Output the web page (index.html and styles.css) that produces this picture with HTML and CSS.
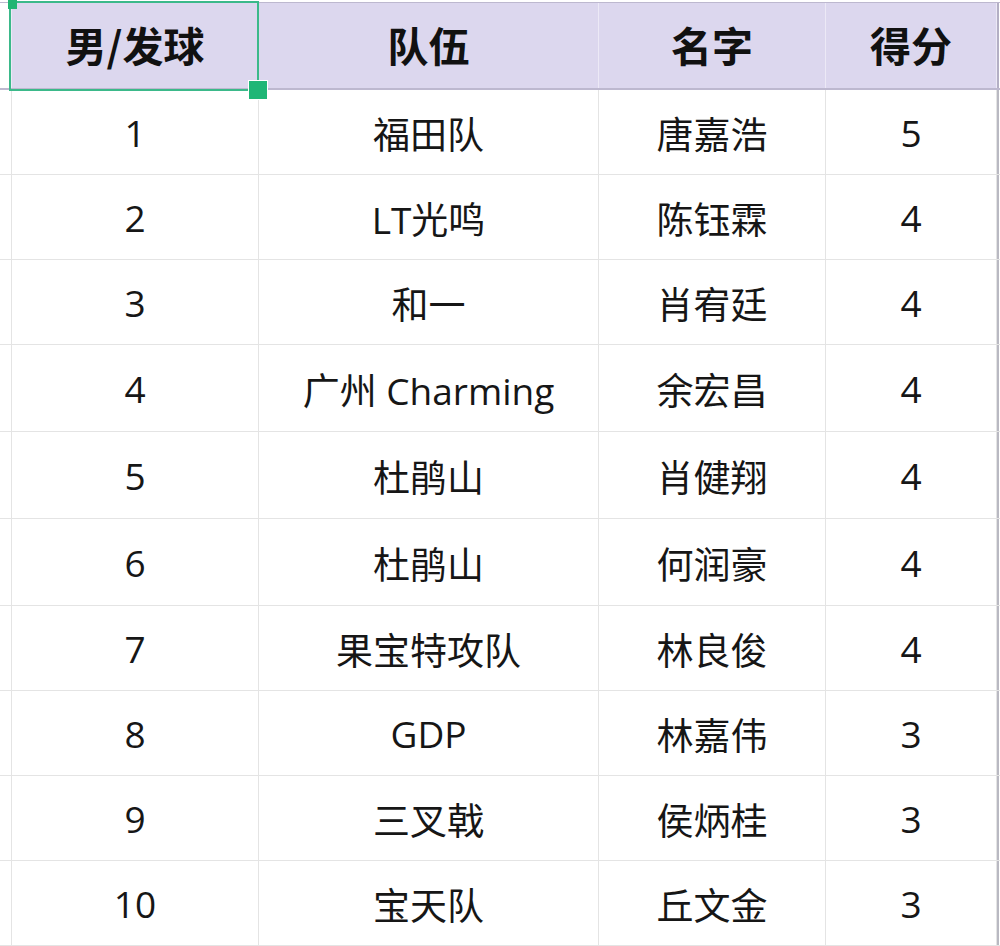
FILE: index.html
```html
<!DOCTYPE html>
<html lang="zh">
<head>
<meta charset="utf-8">
<link rel="stylesheet" href="styles.css">
</head>
<body>
<div class="sheet">
  <div class="row head">
    <div class="c gut"></div>
    <div class="c sel">男/发球<span class="corner"></span><span class="handle"></span></div>
    <div class="c">队伍</div>
    <div class="c">名字</div>
    <div class="c">得分</div>
    <div class="c edge"></div>
  </div>
  <div class="row"><div class="c gut"></div><div class="c">1</div><div class="c">福田队</div><div class="c">唐嘉浩</div><div class="c">5</div><div class="c edge"></div></div>
  <div class="row"><div class="c gut"></div><div class="c">2</div><div class="c">LT光鸣</div><div class="c">陈钰霖</div><div class="c">4</div><div class="c edge"></div></div>
  <div class="row"><div class="c gut"></div><div class="c">3</div><div class="c">和一</div><div class="c">肖宥廷</div><div class="c">4</div><div class="c edge"></div></div>
  <div class="row tall"><div class="c gut"></div><div class="c">4</div><div class="c">广州 Charming</div><div class="c">余宏昌</div><div class="c">4</div><div class="c edge"></div></div>
  <div class="row tall"><div class="c gut"></div><div class="c">5</div><div class="c">杜鹃山</div><div class="c">肖健翔</div><div class="c">4</div><div class="c edge"></div></div>
  <div class="row tall"><div class="c gut"></div><div class="c">6</div><div class="c">杜鹃山</div><div class="c">何润豪</div><div class="c">4</div><div class="c edge"></div></div>
  <div class="row"><div class="c gut"></div><div class="c">7</div><div class="c">果宝特攻队</div><div class="c">林良俊</div><div class="c">4</div><div class="c edge"></div></div>
  <div class="row"><div class="c gut"></div><div class="c">8</div><div class="c">GDP</div><div class="c">林嘉伟</div><div class="c">3</div><div class="c edge"></div></div>
  <div class="row"><div class="c gut"></div><div class="c">9</div><div class="c">三叉戟</div><div class="c">侯炳桂</div><div class="c">3</div><div class="c edge"></div></div>
  <div class="row"><div class="c gut"></div><div class="c">10</div><div class="c">宝天队</div><div class="c">丘文金</div><div class="c">3</div><div class="c edge"></div></div>
</div>
</body>
</html>
```
FILE: styles.css
```css
html, body {
  margin: 0;
  padding: 0;
  background: #ffffff;
}
body {
  padding-top: 2px;
  font-family: "Open Sans", "Noto Sans CJK SC", sans-serif;
  color: #161616;
  overflow: hidden;
}
.sheet {
  width: 1000px;
}
.row {
  display: grid;
  grid-template-columns: 12px 247px 340px 227px 171px 3px;
  height: 85px;
  border-bottom: 1px solid #e4e4e4;
  box-sizing: border-box;
}
.row.tall {
  height: 87px;
}
.c {
  display: flex;
  align-items: center;
  justify-content: center;
  font-size: 37px;
  font-weight: 400;
  border-right: 1px solid #e4e4e4;
  box-sizing: border-box;
  padding-top: 1px;
}
.c.edge {
  border-right: none;
  border-left: 2px solid #b9b9c2;
}
.c.gut {
  background: #ffffff;
}
.head {
  height: 88px;
  border-top: 1px solid #bdb8cf;
  border-bottom: 2px solid #bdb8cf;
}
.head .c {
  background: #dcd7ee;
  font-family: "Noto Sans CJK SC", sans-serif;
  font-weight: 700;
  font-size: 41px;
  color: #111111;
  border-right-color: #ece9f6;
  padding-top: 0;
  padding-bottom: 3px;
}
.head .c.gut {
  background: #ffffff;
}
.head .c.edge {
  background: #ffffff;
  border-left-color: #b3afc4;
}
.sel {
  position: relative;
}
.sel::after {
  content: "";
  position: absolute;
  left: -3px;
  top: -2px;
  right: -1px;
  bottom: -3px;
  border: 2px solid #3bb98a;
  pointer-events: none;
}
.corner {
  position: absolute;
  left: -4px;
  top: -3px;
  width: 9px;
  height: 9px;
  background: #22b574;
  z-index: 2;
}
.handle {
  position: absolute;
  right: -10px;
  bottom: -12px;
  width: 18px;
  height: 18px;
  background: #1fb676;
  border: 1px solid #ffffff;
  z-index: 2;
}
```
